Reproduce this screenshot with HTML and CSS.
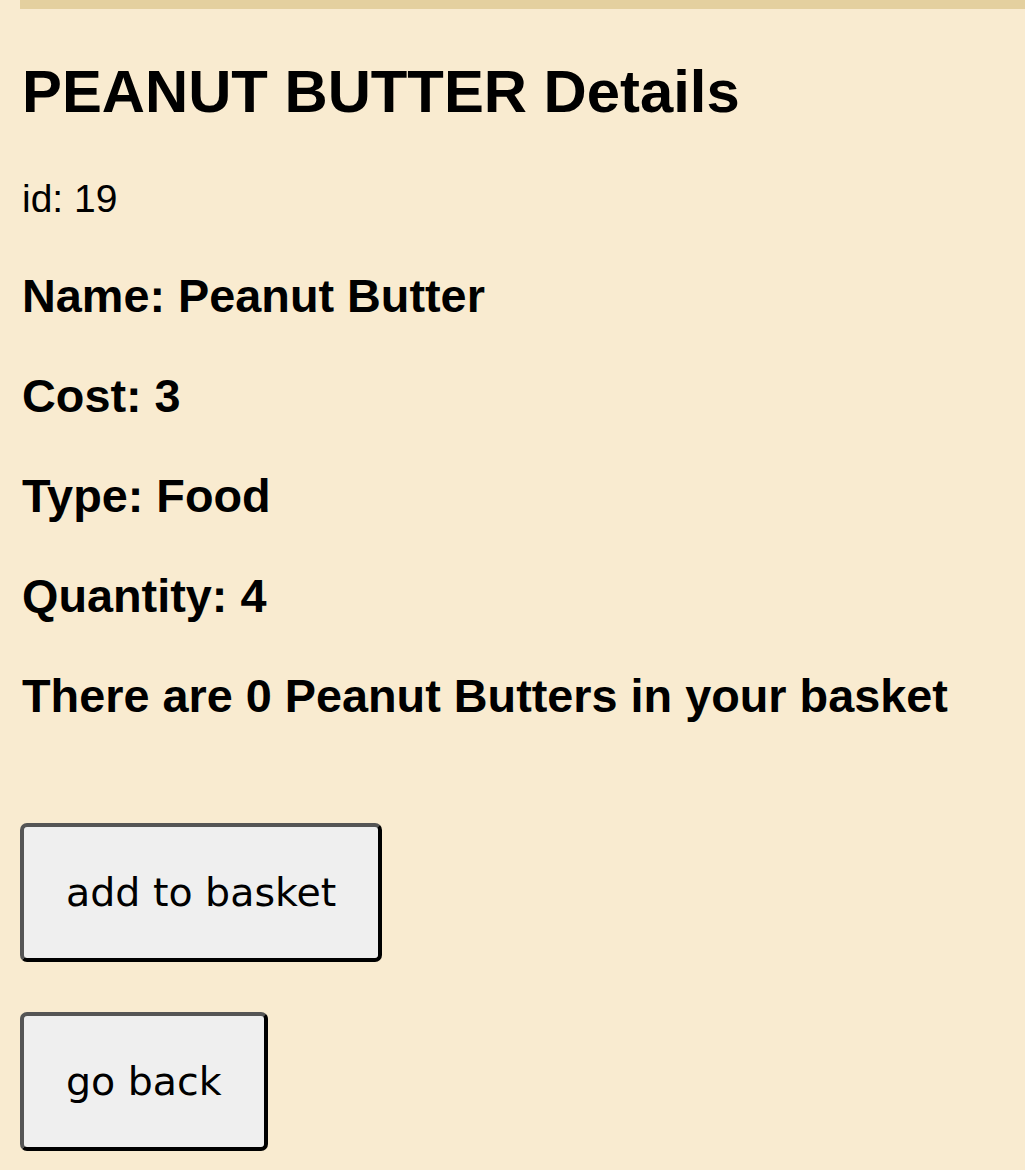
FILE: index.html
```html
<!DOCTYPE html>
<html>
<head>
<meta charset="utf-8">
<link rel="stylesheet" href="styles.css">
</head>
<body>
<div class="topbar"></div>
<main class="detail">
  <h1 class="title">PEANUT BUTTER Details</h1>
  <p class="id">id: 19</p>
  <h3 class="field">Name: Peanut Butter</h3>
  <h3 class="field">Cost: 3</h3>
  <h3 class="field">Type: Food</h3>
  <h3 class="field">Quantity: 4</h3>
  <h3 class="field">There are 0 Peanut Butters in your basket</h3>
  <div class="actions">
    <button class="btn">add to basket</button>
    <button class="btn">go back</button>
  </div>
</main>
</body>
</html>
```
FILE: styles.css
```css
html, body {
  margin: 0;
  padding: 0;
  background: #f9ebd0;
}
body {
  font-family: "Liberation Sans", Arial, sans-serif;
  color: #000;
}
.topbar {
  height: 9px;
  margin-left: 20px;
  background: #e4d09f;
}
.detail {
  padding: 0 20px 0 22px;
}
.title {
  font-size: 59.8px;
  font-weight: bold;
  line-height: 66px;
  margin: 50px 0 0 0;
}
.id {
  font-size: 39px;
  line-height: 45px;
  margin: 51px 0 0 0;
}
.field {
  font-size: 46.8px;
  font-weight: bold;
  line-height: 54px;
  margin: 46px 0 0 0;
}
.id + .field {
  margin-top: 48px;
}
.actions {
  display: flex;
  flex-direction: column;
  align-items: flex-start;
  gap: 50px;
  margin-top: 100px;
  margin-left: -2px;
}
.btn {
  font-family: "DejaVu Sans", sans-serif;
  font-size: 39.5px;
  line-height: 47px;
  background: #efefef;
  color: #000;
  border-style: solid;
  border-width: 4px;
  border-color: #555 #000 #000 #555;
  border-radius: 7px;
  padding: 42px 42px;
}
```
